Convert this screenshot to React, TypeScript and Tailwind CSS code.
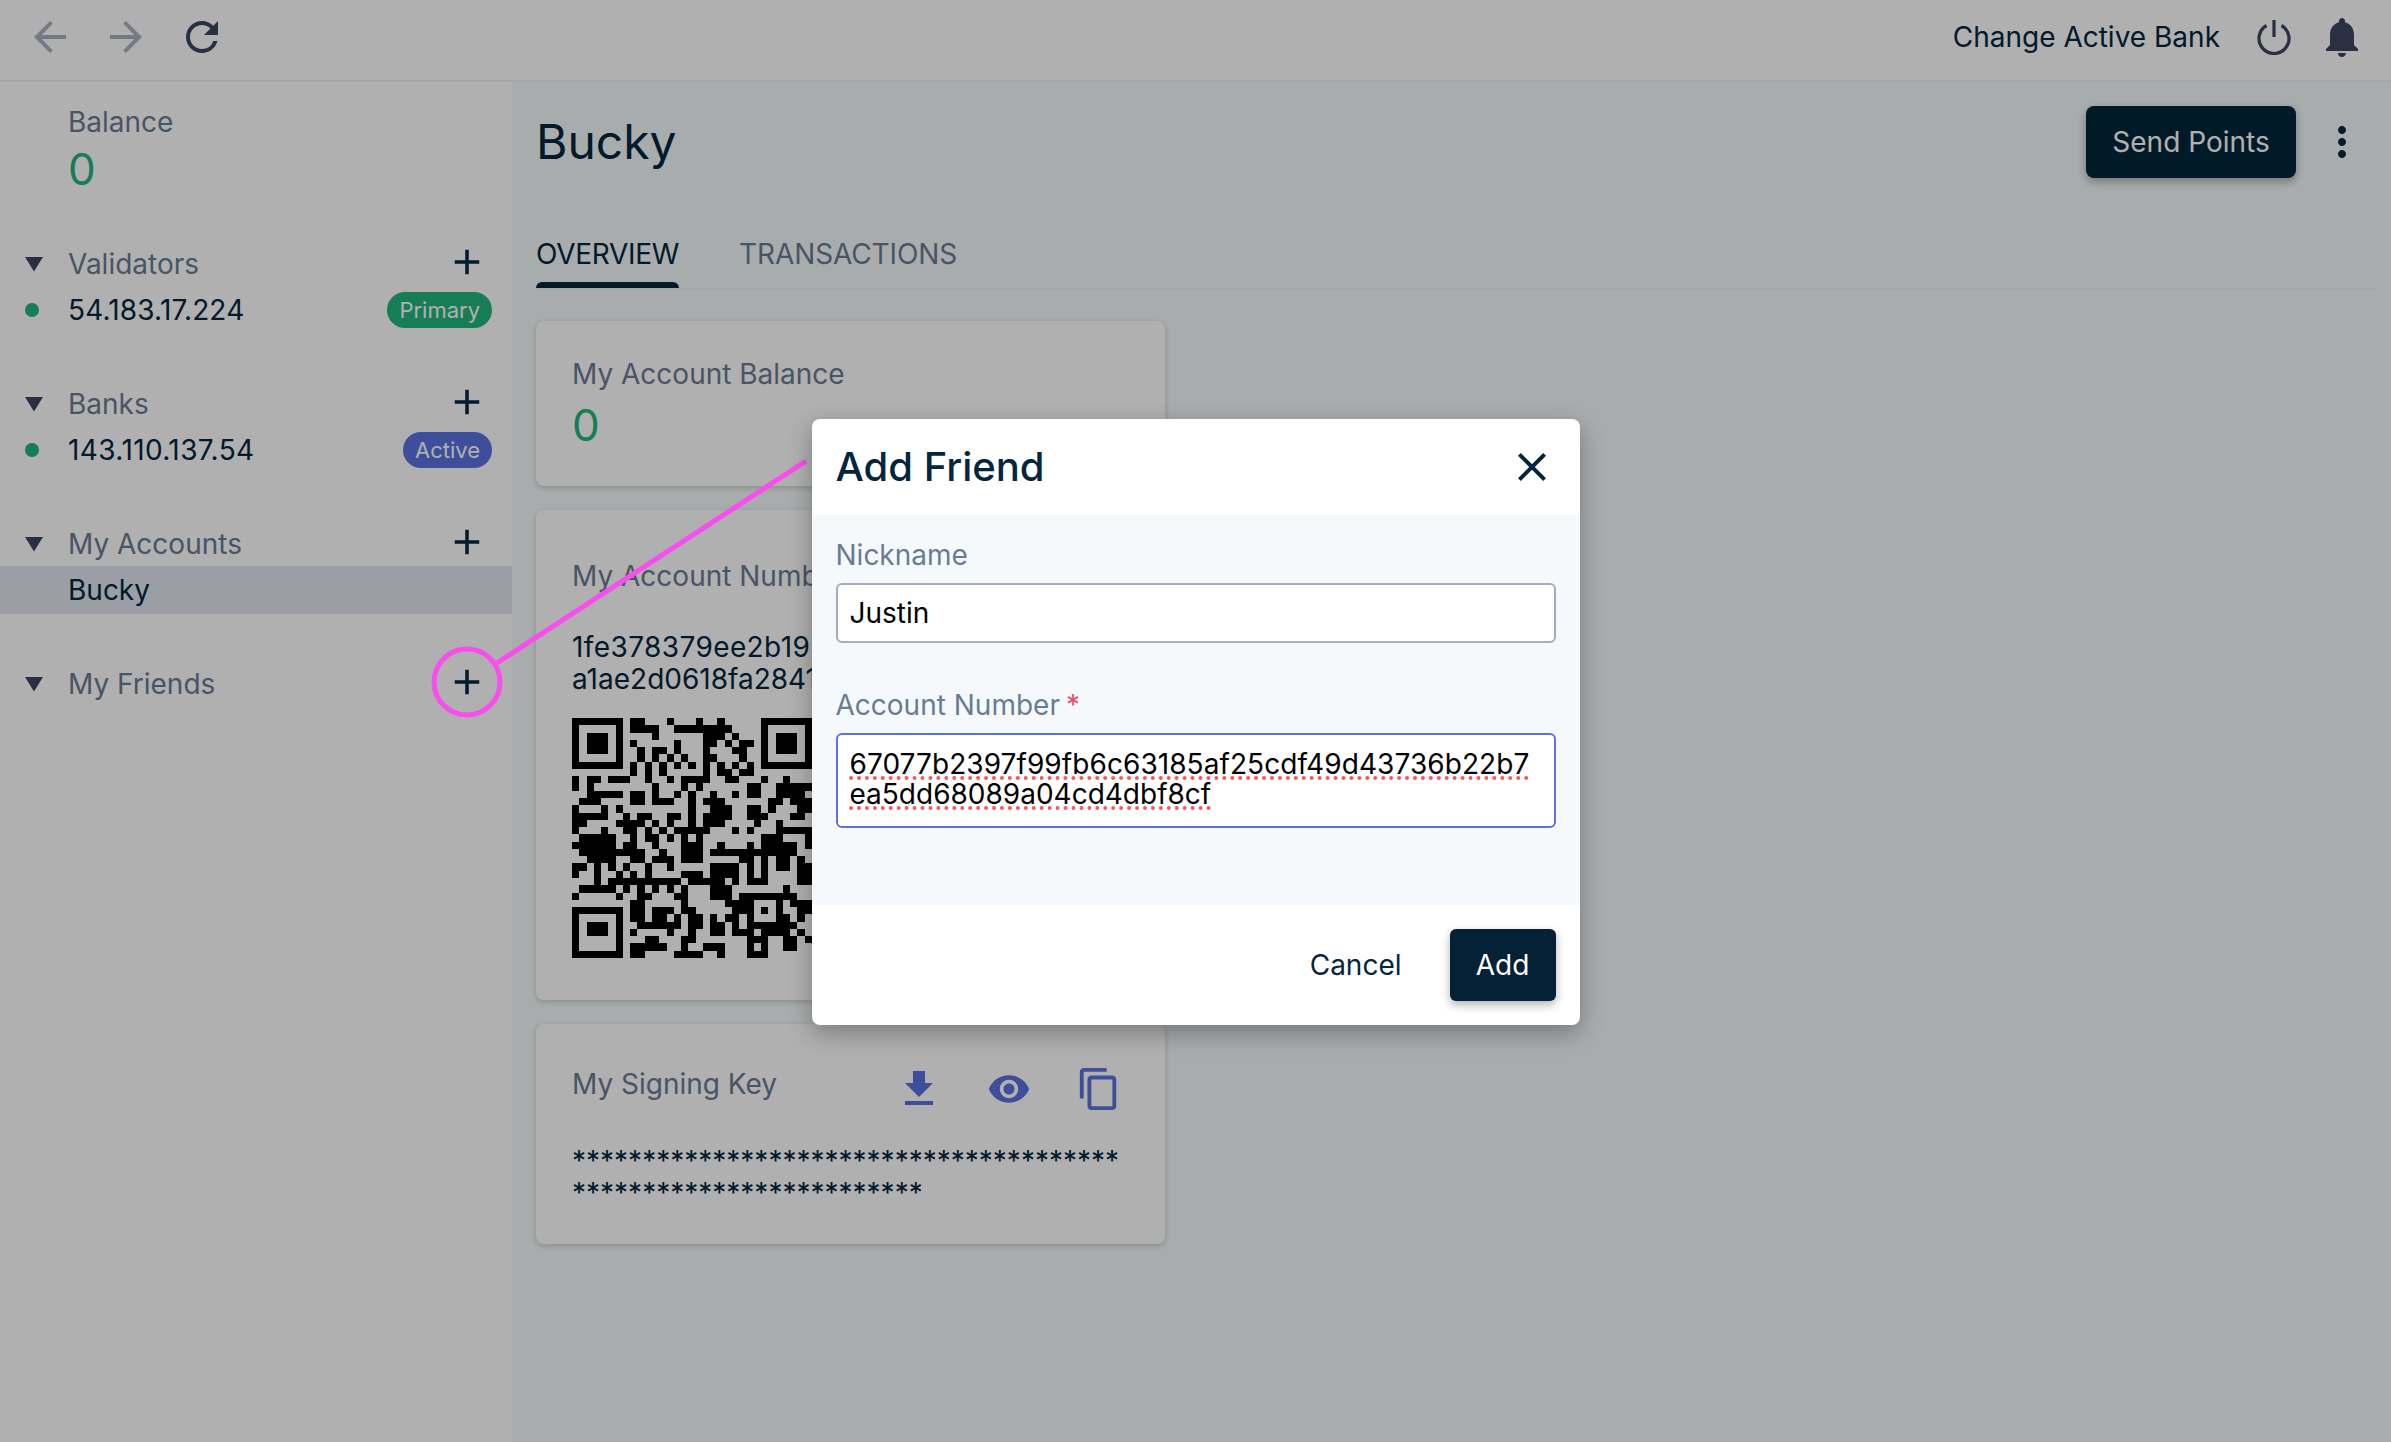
import React from 'react';
import {
  MdAdd,
  MdArrowBack,
  MdArrowForward,
  MdClose,
  MdContentCopy,
  MdFileDownload,
  MdMoreVert,
  MdNotifications,
  MdRefresh,
  MdVisibility,
} from 'react-icons/md';

// qr is 33 x 33, read off the screenshot
const qrRows: string[] = [
  '1111111' + '0' + '11000100010010000' + '0' + '1111111',
  '1000001' + '0' + '11110011111111000' + '0' + '1000001',
  '1011101' + '0' + '00010000001110100' + '0' + '1011101',
  '1011101' + '0' + '10000010001101011' + '0' + '1011101',
  '1011101' + '0' + '01011010001000110' + '0' + '1011101',
  '1000001' + '0' + '01010101001100010' + '0' + '1000001',
  '1111111' + '0' + '10101010101010101' + '0' + '1111111',
  '0000000' + '0' + '10101000001011011' + '0' + '0000000',
  '101101110010010111100110001001000',
  '101000000001000101000000110011111',
  '001111101101001010010010110011110',
  '011100001101110010111000000110111',
  '100010100000000010011100110100011',
  '111110010110011010111100111000110',
  '110000111101010010111000010010000',
  '100010011010101111100010100011111',
  '011111001011010101000000001110001',
  '111111011001000111001000101111101',
  '011111111100100111011111111111100',
  '001111001101110111000001101011010',
  '110101010010010000011110101011011',
  '100100101010000111011110101000011',
  '000101111111111011111010111000011',
  '011111010101010100011100000001000',
  '100000100110001100011101111111100',
  '000000001100000100000111100010111',
  '1111111' + '0' + '110111011000001110101' + '0' + '011',
  '1000001' + '0' + '1101101011010110100011' + '010',
  '1011101' + '0' + '01111110110110' + '10' + '11111' + '110' + '0',
  '1011101' + '0' + '1000010010011011101111010',
  '1000001' + '0' + '0011000110000000111001101',
  '1000001' + '0' + '1111100100111000101001100',
  '1111111' + '0' + '1100001111001000111000000',
];

const QrCode = () => (
  <svg width={240} height={240} viewBox="0 0 33 33" className="block" shapeRendering="crispEdges">
    {qrRows.map((row, y) =>
      row.split('').map((cell, x) => (cell === '1' ? <rect key={`${x}-${y}`} x={x} y={y} width={1} height={1} fill="#000" /> : null)),
    )}
  </svg>
);

const Caret = () => (
  <svg width={20} height={16} viewBox="0 0 20 16" className="absolute left-[24px] top-[14px]">
    <polygon points="1,1 19,1 10,15.5" fill="#3d4460" />
  </svg>
);

const PowerIcon = () => (
  <svg width={36} height={36} viewBox="0 0 36 36" fill="none" stroke="#3d4460" strokeWidth={3.2}>
    <path d="M10.5 6.5a15 15 0 1 0 15 0" />
    <path d="M18 1v17" />
  </svg>
);

const SectionHeader = ({ title }: { title: string }) => (
  <div className="relative flex h-[44px] items-center justify-between pl-[68px] pr-[24px]">
    <Caret />
    <span className="text-[28px] leading-[36px] text-[#6b7b93]">{title}</span>
    <MdAdd size={42} className="-mt-1 text-[#03263e]" />
  </div>
);

const NodeRow = ({ ip, ipClass, badge, badgeClass }: { ip: string; ipClass: string; badge: string; badgeClass: string }) => (
  <div className="relative flex h-[48px] items-center justify-between pl-[68px] pr-[20px]">
    <span className="absolute left-[25px] top-[17px] h-[14px] w-[14px] rounded-full bg-[#21b57f]" />
    <span className={`text-[28px] leading-[36px] text-[#03263e] ${ipClass}`}>{ip}</span>
    <span className={`flex h-[36px] items-center rounded-full px-[12px] text-[22px] text-white ${badgeClass}`}>{badge}</span>
  </div>
);

const Card = ({ className, children }: { className: string; children: React.ReactNode }) => (
  <div className={`w-[629px] rounded-lg bg-white px-[36px] shadow-[0_2px_6px_rgba(0,0,0,0.18)] ${className}`}>{children}</div>
);

export default function App() {
  return (
    <div className="relative flex h-[1442px] w-[2391px] flex-col overflow-hidden bg-white font-['Inter',sans-serif] text-[#03263e]">
      {/* Top bar */}
      <div className="flex h-[82px] items-center justify-between border-b-2 border-[#edf1f7] pb-[6px] pl-[26px] pr-[25px]">
        <div className="flex items-center gap-[28px]">
          <MdArrowBack size={48} className="text-[#aab2c1]" />
          <MdArrowForward size={48} className="text-[#aab2c1]" />
          <MdRefresh size={48} className="text-[#3d4460]" />
        </div>
        <div className="flex items-center">
          <span className="text-[28px] leading-[36px]">Change Active Bank</span>
          <span className="ml-[36px]">
            <PowerIcon />
          </span>
          <MdNotifications size={48} className="ml-[26px] text-[#3d4460]" />
        </div>
      </div>

      <div className="flex flex-1">
        {/* Sidebar */}
        <div className="w-[512px] shrink-0 pt-[24px]">
          <div className="pl-[68px]">
            <div className="text-[28px] leading-[32px] text-[#6b7b93]">Balance</div>
            <div className="mt-[7px] text-[44px] leading-[48px] text-[#21b57f]">0</div>
          </div>

          <div className="mt-[49px]">
            <SectionHeader title="Validators" />
            <NodeRow ip="54.183.17.224" ipClass="tracking-[0.15px]" badge="Primary" badgeClass="bg-[#21b57f]" />
          </div>
          <div className="mt-[48px]">
            <SectionHeader title="Banks" />
            <NodeRow ip="143.110.137.54" ipClass="tracking-[0.4px]" badge="Active" badgeClass="bg-[#5b72e0]" />
          </div>
          <div className="mt-[48px]">
            <SectionHeader title="My Accounts" />
            <div className="flex h-[48px] items-center bg-[#e1e6ef] pl-[68px] text-[28px] leading-[36px]">Bucky</div>
          </div>
          <div className="mt-[48px]">
            <SectionHeader title="My Friends" />
          </div>
        </div>

        {/* Main */}
        <div className="flex-1 bg-[#f5fafb] pl-[24px] pr-[16px] pt-[24px]">
          <div className="flex h-[72px] items-center justify-between">
            <h1 className="text-[48px] font-normal leading-[56px]">Bucky</h1>
            <div className="flex items-center">
              <button className="h-[72px] w-[210px] rounded-lg bg-[#02263a] text-[28px] text-white shadow-[0_4px_10px_rgba(0,0,0,0.3)]">
                Send Points
              </button>
              <MdMoreVert size={48} className="ml-[22px] mr-[9px]" />
            </div>
          </div>

          <div className="mt-[40px] flex gap-[60px] border-b-2 border-[#edf1f7] text-[28px] uppercase">
            <div className="flex flex-col">
              <span className="mt-[18px] leading-[36px] tracking-[-0.3px]">Overview</span>
              <span className="mt-[10px] h-[6px] rounded-t-md bg-[#02263a]" />
            </div>
            <div className="flex flex-col">
              <span className="mt-[18px] leading-[36px] tracking-[-0.1px] text-[#6b7b93]">Transactions</span>
            </div>
          </div>

          <Card className="mt-[31px] pb-[37px] pt-[35px]">
            <div className="text-[28px] leading-[36px] text-[#6b7b93]">My Account Balance</div>
            <div className="mt-[9px] text-[44px] leading-[48px] text-[#21b57f]">0</div>
          </Card>

          <Card className="mt-[24px] pb-[42px] pt-[48px]">
            <div className="text-[28px] leading-[36px] text-[#6b7b93]">My Account Number</div>
            <div className="mt-[37px] whitespace-nowrap text-[28px] leading-[32px]">
              <div className="tracking-[0.4px]">1fe378379ee2b19</div>
              <div>a1ae2d0618fa2841</div>
            </div>
            <div className="mt-[23px]">
              <QrCode />
            </div>
          </Card>

          <Card className="mt-[24px] pb-[35px] pt-[41px]">
            <div className="flex h-[48px] items-center justify-between">
              <span className="mb-[10px] text-[28px] leading-[36px] text-[#6b7b93]">My Signing Key</span>
              <div className="mr-[6px] flex items-center gap-[42px] text-[#5b72e0]">
                <span className="flex w-[48px] justify-center">
                  <MdFileDownload size={48} />
                </span>
                <span className="flex w-[48px] justify-center">
                  <MdVisibility size={44} />
                </span>
                <span className="flex w-[48px] justify-center">
                  <MdContentCopy size={46} />
                </span>
              </div>
            </div>
            <div className="mt-[32px] text-[28px] leading-[32px]">
              <div>***************************************</div>
              <div>*************************</div>
            </div>
          </Card>
        </div>
      </div>

      {/* Dimmed backdrop */}
      <div className="absolute inset-0 bg-black/[.31]" />

      {/* Pink annotation */}
      <svg className="pointer-events-none absolute inset-0" width={2391} height={1442} fill="none" stroke="#f94df0" strokeWidth={5}>
        <circle cx={467} cy={682} r={33} />
        <path d="M497 663 L806 461" />
      </svg>

      {/* Add Friend modal */}
      <div className="absolute inset-0 flex items-center justify-center pt-[2px]">
        <div className="w-[768px] overflow-hidden rounded-lg bg-white shadow-[0_8px_24px_rgba(0,0,0,0.3)]">
          <div className="flex h-[96px] items-center justify-between px-[24px]">
            <h2 className="text-[40px] font-medium leading-[48px]">Add Friend</h2>
            <MdClose size={48} />
          </div>
          <div className="h-[390px] bg-[#f5f9fc] px-[24px] pt-[22px]">
            <div className="text-[28px] leading-[36px] text-[#6b7b93]">Nickname</div>
            <div className="mt-[10px] flex h-[60px] items-center rounded-md border-2 border-[#a5adbb] bg-white px-[12px] text-[28px] text-black">
              Justin
            </div>
            <div className="mt-[44px] flex text-[28px] leading-[36px] text-[#6b7b93]">
              Account Number<span className="ml-[6px] text-[#e8506a]">*</span>
            </div>
            <div className="mt-[10px] h-[95px] rounded-md border-2 border-[#5b72e0] bg-white px-[12px] pt-[14px] text-[28px] leading-[30px] text-black">
              <div className="tracking-[0.07px]">
                <span className="underline decoration-[#f5595c] decoration-dotted decoration-[4px] underline-offset-[2px]">
                  67077b2397f99fb6c63185af25cdf49d43736b22b7
                </span>
              </div>
              <div>
                <span className="underline decoration-[#f5595c] decoration-dotted decoration-[4px] underline-offset-[2px]">
                  ea5dd68089a04cd4dbf8cf
                </span>
              </div>
            </div>
          </div>
          <div className="flex h-[120px] items-center justify-end gap-[48px] px-[24px]">
            <span className="text-[28px]">Cancel</span>
            <button className="h-[72px] w-[106px] rounded-md bg-[#042136] text-[28px] text-white shadow-[0_4px_10px_rgba(0,0,0,0.3)]">
              Add
            </button>
          </div>
        </div>
      </div>
    </div>
  );
}
